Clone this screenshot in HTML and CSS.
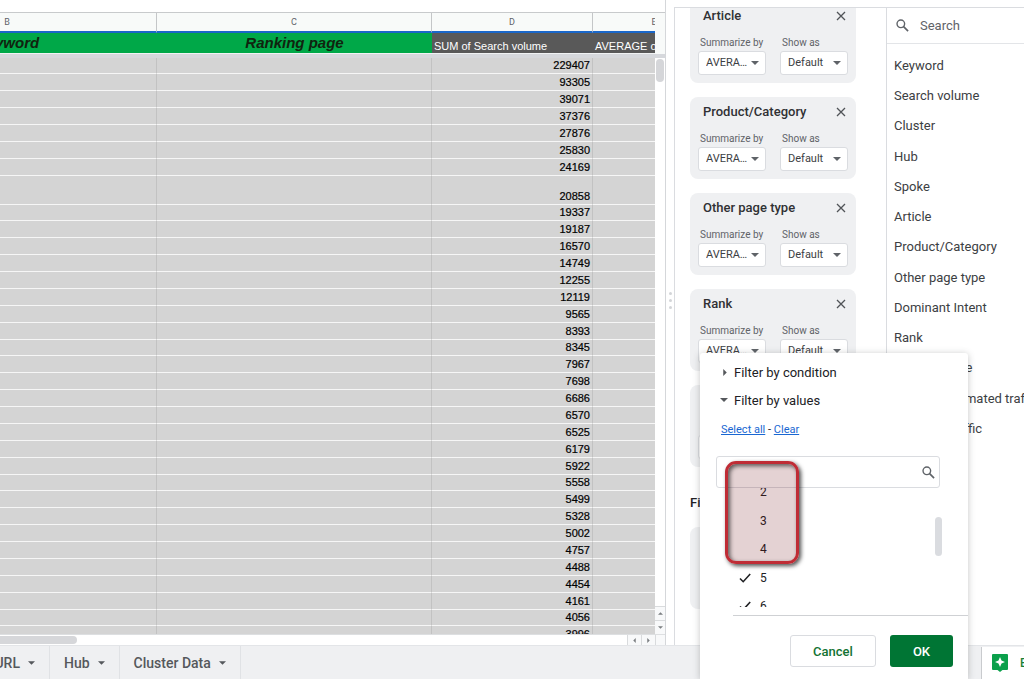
FILE: index.html
```html
<!DOCTYPE html>
<html lang="en">
<head>
<meta charset="utf-8">
<title>Pivot table editor</title>
<link rel="stylesheet" href="styles.css">
</head>
<body>
<svg class="defs" aria-hidden="true">
  <symbol id="close" viewBox="0 0 10 10"><path d="M1 1l8 8M9 1L1 9" fill="none" stroke="currentColor" stroke-width="1.3"/></symbol>
  <symbol id="down" viewBox="0 0 8 4"><path d="M0 0h8L4 4z" fill="currentColor"/></symbol>
  <symbol id="right" viewBox="0 0 4 8"><path d="M0 0v8l4-4z" fill="currentColor"/></symbol>
  <symbol id="search" viewBox="0 0 14 14"><circle cx="5.2" cy="5.2" r="4.1" fill="none" stroke="currentColor" stroke-width="1.5"/><path d="M8.200 8.200l4.800 4.800" stroke="currentColor" stroke-width="1.8"/></symbol>
  <symbol id="check" viewBox="0 0 12 10"><path d="M1 5.500l3.200 3.200L11.200 1" fill="none" stroke="currentColor" stroke-width="1.6"/></symbol>
</svg>
<div class="app">
  <div class="workspace">
    <main class="sheet">
      <div class="sheet-main">
        <div class="grid-view">
          <table class="grid">
            <colgroup><col class="col-b"><col class="col-c"><col class="col-d"><col class="col-e"></colgroup>
            <thead>
              <tr class="letters"><th>B</th><th>C</th><th>D</th><th>E</th></tr>
              <tr class="titles"><th class="green">Keyword</th><th class="green">Ranking page</th><th class="dark">SUM of Search volume</th><th class="dark">AVERAGE of Hub</th></tr>
              <tr class="freeze"><td colspan="4"></td></tr>
            </thead>
            <tbody id="rows"></tbody>
          </table>
        </div>
        <div class="vscroll">
          <div class="vscroll-head"></div>
          <div class="vscroll-track"><div class="vthumb"></div></div>
          <button class="arrow" aria-label="Scroll up"><svg class="tiny flip"><use href="#down"/></svg></button>
          <button class="arrow" aria-label="Scroll down"><svg class="tiny"><use href="#down"/></svg></button>
        </div>
      </div>
      <div class="hscroll">
        <div class="hscroll-track"><div class="hthumb"></div></div>
        <button class="arrow" aria-label="Scroll left"><svg class="tiny-side flip"><use href="#right"/></svg></button>
        <button class="arrow" aria-label="Scroll right"><svg class="tiny-side"><use href="#right"/></svg></button>
        <div class="corner"></div>
      </div>
    </main>
    <div class="splitter"><i></i><i></i><i></i></div>
    <aside class="editor">
      <section class="values">
        <div class="cards" id="cards"></div>
        <h2 class="filters-title">Filters</h2>
        <div class="card"></div>
      </section>
      <section class="fields">
        <label class="field-search"><svg class="icon-search"><use href="#search"/></svg><input type="text" placeholder="Search" aria-label="Search fields"></label>
        <ul class="field-list">
          <li>Keyword</li><li>Search volume</li><li>Cluster</li><li>Hub</li><li>Spoke</li><li>Article</li><li>Product/Category</li><li>Other page type</li><li>Dominant Intent</li><li>Rank</li><li>Ranking page</li><li>Monthly estimated traffic</li><li>Potential traffic</li>
        </ul>
      </section>
    </aside>
  </div>
  <footer class="tabs">
    <button class="tab tab-first">URL<svg class="caret"><use href="#down"/></svg></button>
    <button class="tab">Hub<svg class="caret"><use href="#down"/></svg></button>
    <button class="tab">Cluster Data<svg class="caret"><use href="#down"/></svg></button>
    <button class="explore"><svg class="icon-explore" viewBox="0 0 16 18"><path d="M1 0h14a1 1 0 0 1 1 1v14a1 1 0 0 1-1 1h-4.500L8 18l-2.500-2H1a1 1 0 0 1-1-1V1a1 1 0 0 1 1-1z" fill="#0ba04b"/><path d="M8 3l1.500 3.500L13 8 9.500 9.500 8 13 6.500 9.500 3 8l3.500-1.500z" fill="#fff"/></svg>Explore</button>
  </footer>
  <div class="popover" role="dialog" aria-label="Filter">
    <button class="section-toggle"><span class="marker"><svg class="tri-right"><use href="#right"/></svg></span>Filter by condition</button>
    <button class="section-toggle"><span class="marker"><svg class="tri-down"><use href="#down"/></svg></span>Filter by values</button>
    <p class="links"><a href="#all">Select all</a> - <a href="#clear">Clear</a></p>
    <label class="value-search"><input type="text" aria-label="Search values"><svg class="icon-search"><use href="#search"/></svg></label>
    <div class="value-view">
      <ul class="value-list">
        <li><span class="tick"></span>2</li>
        <li><span class="tick"></span>3</li>
        <li><span class="tick"></span>4</li>
        <li><span class="tick"><svg><use href="#check"/></svg></span>5</li>
        <li><span class="tick"><svg><use href="#check"/></svg></span>6</li>
      </ul>
      <div class="value-thumb"></div>
    </div>
    <div class="actions"><button class="cancel">Cancel</button><button class="ok">OK</button></div>
    <div class="highlight"></div>
  </div>
</div>
<script src="app.js"></script>
</body>
</html>
```
FILE: styles.css
```css
* { box-sizing: border-box; }
body { margin: 0; overflow: hidden; font-family: Roboto, "Liberation Sans", sans-serif; font-size: 13px; color: #3c4043; background: #fff; }
button { font: inherit; color: inherit; border: 0; padding: 0; background: none; }
input { font: inherit; color: inherit; border: 0; padding: 0; background: none; outline: 0; min-width: 0; }
ul { list-style: none; margin: 0; padding: 0; }
svg { display: block; flex: none; }
.defs { display: none; }
.app { position: relative; height: 100vh; display: flex; flex-direction: column; }
.workspace { flex: 1; min-height: 0; display: flex; }

.sheet { flex: 1; min-width: 0; display: flex; flex-direction: column; padding-top: 12px; border-right: 1px solid #d5d7da; }
.sheet-main { flex: 1; min-height: 0; display: flex; border-top: 1px solid #c8cacc; }
.grid-view { flex: 1; min-width: 0; overflow: hidden; }
.grid { table-layout: fixed; width: 858px; margin-left: -142px; border-collapse: separate; border-spacing: 0; font-family: "Liberation Sans", Arial, sans-serif; font-size: 11px; color: #000; }
.col-b { width: 299px; }
.col-c { width: 275px; }
.col-d { width: 161px; }
.col-e { width: 123px; }
.grid th, .grid td { padding: 0 2px; white-space: nowrap; overflow: hidden; }
.grid .letters th { height: 20px; font: 400 9px/18px Roboto, sans-serif; color: #5f6368; background: #f8faf9; border-right: 1px solid #c4c6c8; border-bottom: 2px solid #1a67c9; }
.grid .titles th { height: 21px; border-bottom: 1px solid #f1f3f4; }
.grid .titles .green { font: italic bold 15px/20px "Liberation Sans", Arial, sans-serif; color: #10240f; background: #00a848; }
.grid .titles .dark { text-align: left; vertical-align: bottom; font-weight: 400; line-height: 14px; color: #fff; background: #595959; }
.grid .freeze td { height: 4px; line-height: 0; background: #d6d8dc; }
.grid tbody td { height: 17px; background: #d4d4d4; border-right: 1px solid #c2c2c2; border-bottom: 1px solid #f6f6f6; text-align: right; vertical-align: bottom; line-height: 15px; -webkit-text-stroke: 0.2px #000; }
.grid tbody tr:nth-child(8n+1) td { height: 16px; }
.grid tbody .tall td { height: 29px; }

.vscroll { width: 10px; display: flex; flex-direction: column; background: #fff; }
.vscroll-head { height: 45px; background: #f8faf9; border-bottom: 4px solid #d6d8dc; }
.vscroll-track { flex: 1; padding: 1px; }
.vthumb { height: 23px; border-radius: 4px; background: #d5d6d9; }
.arrow { display: flex; align-items: center; justify-content: center; background: #f8f9fa; border: 0 solid #d9dbdd; color: #7b7e81; }
.vscroll .arrow { height: 14px; border-top-width: 1px; }
.tiny { width: 5px; height: 3px; }
.tiny-side { width: 3px; height: 5px; }
.flip { transform: rotate(180deg); }
.hscroll { height: 11px; display: flex; border-top: 1px solid #dddfe1; background: #fff; }
.hscroll-track { flex: 1; padding: 1px 0; }
.hthumb { width: 77px; height: 8px; border-radius: 0 4px 4px 0; background: #d6d7da; }
.hscroll .arrow { width: 14px; border-left-width: 1px; }
.corner { width: 10px; background: #f8f9fa; border-left: 1px solid #d9dbdd; }

.splitter { width: 8px; display: flex; flex-direction: column; justify-content: center; align-items: center; gap: 4px; padding-bottom: 44px; }
.splitter i { width: 3px; height: 3px; border-radius: 50%; background: #d3d5d8; }

.editor { width: 350px; margin-top: 7px; display: flex; overflow: hidden; border-top: 1px solid #dadce0; border-left: 1px solid #dadce0; }
.values { width: 211px; padding: 0 30px 0 15px; overflow: hidden; flex: none; }
.cards { margin-top: -7px; display: flex; flex-direction: column; gap: 14px; }
.card { min-height: 82px; padding: 7px 8px; border-radius: 8px; background: #eff0f2; }
.card-head { display: flex; align-items: center; justify-content: space-between; padding: 0 2px 0 5px; }
.card h3 { margin: 0; font-size: 13px; font-weight: 500; line-height: 16px; color: #303134; }
.card-head button { color: #505357; }
.card-head svg { width: 10px; height: 10px; }
.card-fields { display: flex; gap: 14px; padding-top: 13px; }
.card-field { width: 68px; font-size: 10px; line-height: 12px; color: #5f6368; }
.card-field label { display: block; padding-left: 2px; white-space: nowrap; }
.pick { position: relative; display: block; margin-top: 2px; color: #5f6368; }
.pick select { appearance: none; width: 100%; height: 24px; padding: 0 15px 0 7px; border: 1px solid #dadce0; border-radius: 3px; background: #fff; color: #3c4043; font: 11px/20px Roboto, sans-serif; text-overflow: ellipsis; white-space: nowrap; overflow: hidden; }
.pick svg { position: absolute; right: 7px; top: 10px; width: 8px; height: 4px; }
.filters-title { margin: 27px 0 15px; font-size: 13px; font-weight: 500; line-height: 18px; color: #202124; }
.fields { flex: 1; min-width: 0; border-left: 1px solid #dadce0; white-space: nowrap; }
.field-search { display: flex; align-items: center; gap: 11px; height: 36px; padding-left: 9px; border-bottom: 1px solid #e3e5e8; color: #5f6368; }
.field-search input { flex: 1; }
.field-search input::placeholder { color: #5f6368; opacity: 1; }
.icon-search { width: 13px; height: 13px; }
.field-list { padding: 7px 0 0 7px; }
.field-list li { line-height: 30px; }
.field-list li:nth-child(4n) { padding-top: 1px; }

.tabs { height: 34px; display: flex; background: #eff0f2; border-top: 1px solid #e3e5e8; font-size: 14px; font-weight: 500; color: #55585c; }
.tab { display: flex; align-items: center; gap: 8px; padding: 0 14px; border-right: 1px solid #e0e2e5; white-space: nowrap; }
.tab-first { width: 50px; justify-content: flex-end; overflow: hidden; }
.caret { width: 7px; height: 4px; }
.explore { width: 43px; margin: 1px 0 0 auto; padding-left: 10px; display: flex; align-items: center; gap: 12px; overflow: hidden; background: #fff; border-left: 1px solid #c9cbce; color: #188038; font-size: 12px; }
.icon-explore { width: 16px; height: 18px; }

.popover { position: absolute; left: 700px; top: 353px; bottom: 0; width: 268px; padding-top: 5px; border-radius: 3px 3px 0 0; background: #fff; box-shadow: 0 1px 7px rgba(60, 64, 67, 0.3); color: #202124; }
.section-toggle { display: flex; align-items: center; width: 100%; height: 28px; padding-left: 20px; }
.marker { width: 14px; display: flex; align-items: center; color: #55585c; }
.tri-right { width: 4px; height: 7px; margin-left: 3px; }
.tri-down { width: 8px; height: 4px; }
.links { margin: 8px 0 18px 21px; font-size: 11px; line-height: 16px; }
.links a { color: #1967d2; }
.value-search { display: flex; align-items: center; height: 32px; margin: 0 28px 0 16px; padding: 0 4px 0 8px; border: 1px solid #dadce0; border-radius: 3px; color: #5f6368; }
.value-search input { flex: 1; }
.value-view { display: flex; justify-content: space-between; height: 119px; overflow: hidden; padding-right: 26px; }
.value-list { margin-top: -10px; padding-left: 39px; }
.value-list li { display: flex; align-items: center; height: 28px; font-size: 12px; }
.value-list li:nth-child(even) { height: 29px; }
.tick { width: 21px; }
.tick svg { width: 12px; height: 10px; }
.value-thumb { width: 7px; height: 39px; margin-top: 29px; border-radius: 4px; background: #dadce0; }
.actions { display: flex; justify-content: flex-end; gap: 14px; margin: 8px 0 0 33px; padding: 19px 15px 0 0; border-top: 1px solid #cfd1d4; }
.actions button { height: 32px; border-radius: 3px; font-weight: 500; }
.actions .cancel { width: 86px; border: 1px solid #dadce0; color: #137333; background: #fff; }
.actions .ok { width: 63px; background: #007534; color: #fff; }
.highlight { position: absolute; left: 25px; top: 108px; width: 74px; height: 103px; border: 3px solid #bf2c35; border-radius: 11px; background: rgba(110, 15, 20, 0.19); box-shadow: 2px 2px 4px rgba(0, 0, 0, 0.7), inset 2px 2px 4px rgba(0, 0, 0, 0.6); pointer-events: none; }
```
FILE: app.js
```js
const volumes = [229407, 93305, 39071, 37376, 27876, 25830, 24169, 20858, 19337, 19187, 16570, 14749, 12255, 12119, 9565, 8393, 8345, 7967, 7698, 6686, 6570, 6525, 6179, 5922, 5558, 5499, 5328, 5002, 4757, 4488, 4454, 4161, 4056, 3996];
document.getElementById("rows").innerHTML = volumes
  .map((v) => `<tr${v === 20858 ? ' class="tall"' : ""}><td></td><td></td><td>${v}</td><td></td></tr>`)
  .join("");

const pick = (id, label, value) => `
  <div class="card-field"><label for="${id}">${label}</label>
    <span class="pick"><select id="${id}"><option>${value}</option></select><svg><use href="#down"/></svg></span>
  </div>`;
document.getElementById("cards").innerHTML = ["Article", "Product/Category", "Other page type", "Rank", "Traffic"]
  .map((name, i) => `
  <article class="card">
    <div class="card-head"><h3>${name}</h3><button aria-label="Remove ${name}"><svg><use href="#close"/></svg></button></div>
    <div class="card-fields">${pick("sum" + i, "Summarize by", "AVERAGE")}${pick("show" + i, "Show as", "Default")}</div>
  </article>`)
  .join("");
```
